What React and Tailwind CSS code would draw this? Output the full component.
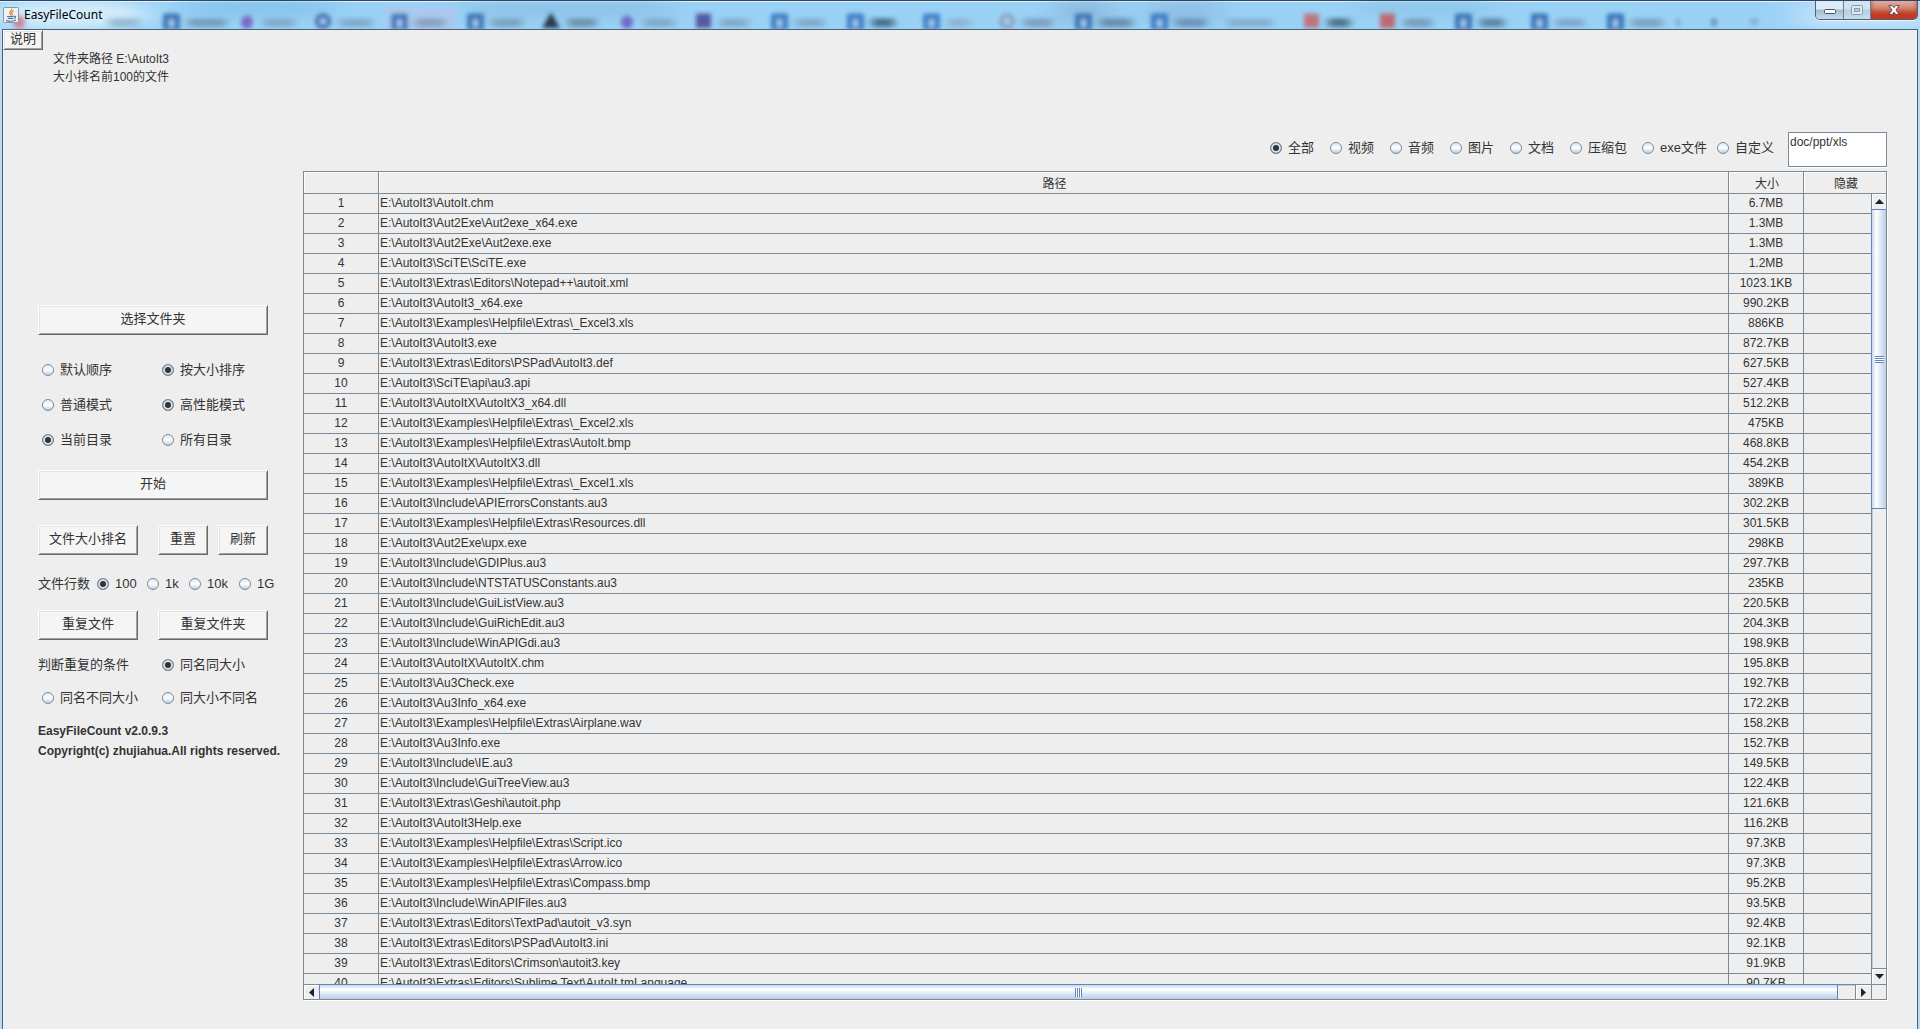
import { useState } from 'react'
import clsx from 'clsx'

const files = [
  ['AutoIt.chm', '6.7MB'],
  ['Aut2Exe\\Aut2exe_x64.exe', '1.3MB'],
  ['Aut2Exe\\Aut2exe.exe', '1.3MB'],
  ['SciTE\\SciTE.exe', '1.2MB'],
  ['Extras\\Editors\\Notepad++\\autoit.xml', '1023.1KB'],
  ['AutoIt3_x64.exe', '990.2KB'],
  ['Examples\\Helpfile\\Extras\\_Excel3.xls', '886KB'],
  ['AutoIt3.exe', '872.7KB'],
  ['Extras\\Editors\\PSPad\\AutoIt3.def', '627.5KB'],
  ['SciTE\\api\\au3.api', '527.4KB'],
  ['AutoItX\\AutoItX3_x64.dll', '512.2KB'],
  ['Examples\\Helpfile\\Extras\\_Excel2.xls', '475KB'],
  ['Examples\\Helpfile\\Extras\\AutoIt.bmp', '468.8KB'],
  ['AutoItX\\AutoItX3.dll', '454.2KB'],
  ['Examples\\Helpfile\\Extras\\_Excel1.xls', '389KB'],
  ['Include\\APIErrorsConstants.au3', '302.2KB'],
  ['Examples\\Helpfile\\Extras\\Resources.dll', '301.5KB'],
  ['Aut2Exe\\upx.exe', '298KB'],
  ['Include\\GDIPlus.au3', '297.7KB'],
  ['Include\\NTSTATUSConstants.au3', '235KB'],
  ['Include\\GuiListView.au3', '220.5KB'],
  ['Include\\GuiRichEdit.au3', '204.3KB'],
  ['Include\\WinAPIGdi.au3', '198.9KB'],
  ['AutoItX\\AutoItX.chm', '195.8KB'],
  ['Au3Check.exe', '192.7KB'],
  ['Au3Info_x64.exe', '172.2KB'],
  ['Examples\\Helpfile\\Extras\\Airplane.wav', '158.2KB'],
  ['Au3Info.exe', '152.7KB'],
  ['Include\\IE.au3', '149.5KB'],
  ['Include\\GuiTreeView.au3', '122.4KB'],
  ['Extras\\Geshi\\autoit.php', '121.6KB'],
  ['AutoIt3Help.exe', '116.2KB'],
  ['Examples\\Helpfile\\Extras\\Script.ico', '97.3KB'],
  ['Examples\\Helpfile\\Extras\\Arrow.ico', '97.3KB'],
  ['Examples\\Helpfile\\Extras\\Compass.bmp', '95.2KB'],
  ['Include\\WinAPIFiles.au3', '93.5KB'],
  ['Extras\\Editors\\TextPad\\autoit_v3.syn', '92.4KB'],
  ['Extras\\Editors\\PSPad\\AutoIt3.ini', '92.1KB'],
  ['Extras\\Editors\\Crimson\\autoit3.key', '91.9KB'],
  ['Extras\\Editors\\Sublime Text\\AutoIt.tmLanguage', '90.7KB'],
]

// browser tabs showing through the glass title bar: [x, shape, icon colour, label width, label colour]
const tabs = [
  [12, 'dot', '#c98a9c', 0, '#7a94ab'],
  [85, 'none', '', 30, '#8fb2cc'],
  [164, 'page', '#3c76b8', 38, '#6b93b4'],
  [240, 'dot', '#7a6cc4', 30, '#7ba3c2'],
  [316, 'ring', '#4c62a6', 32, '#7ba3c2'],
  [392, 'page', '#3c76b8', 28, '#8297ba'],
  [468, 'page', '#3c76b8', 30, '#7398b5'],
  [544, 'peak', '#26384a', 28, '#66869f'],
  [620, 'dot', '#6f6cc8', 30, '#7ba3c2'],
  [696, 'box', '#5458a0', 28, '#7ba3c2'],
  [772, 'page', '#3c7fc4', 28, '#7ba3c2'],
  [848, 'page', '#3c7fc4', 22, '#36566f'],
  [924, 'page', '#4080c6', 22, '#8aaccc'],
  [1000, 'ring', '#8d9cb8', 28, '#7795b5'],
  [1076, 'page', '#3a75b4', 32, '#5c80a0'],
  [1152, 'page', '#3c7cc4', 30, '#6389ac'],
  [1204, 'none', '', 44, '#7fa7c8'],
  [1304, 'box', '#bd7680', 22, '#3f5a72'],
  [1380, 'box', '#bd6a72', 28, '#6f92b0'],
  [1456, 'page', '#3874b8', 24, '#4f7392'],
  [1532, 'page', '#3874b8', 28, '#78a0c2'],
  [1608, 'page', '#3874b8', 30, '#7398b8'],
]

const TabIcon = ({ x, shape, color }) => {
  if (shape === 'dot') return <ellipse cx={x + 7} cy="22" rx="6" ry="7" fill={color} />
  if (shape === 'ring') return <circle cx={x + 7} cy="21" r="6" fill="none" stroke={color} strokeWidth="4" />
  if (shape === 'peak') return <path d={`M${x + 7} 12L${x + 16} 28H${x - 2}z`} fill={color} />
  if (shape === 'box') return <rect x={x} y="13" width="15" height="15" fill={color} />
  if (shape === 'none') return null
  return (
    <>
      <rect x={x - 1} y="13" width="17" height="17" rx="2" fill={color} />
      <rect x={x + 5} y="19" width="5" height="8" fill="#a9cdf2" />
    </>
  )
}

const TabGlow = () => (
  <svg className="absolute inset-0 w-full h-full" viewBox="0 0 1920 29" preserveAspectRatio="none" aria-hidden="true">
    <defs>
      <filter id="soft" x="-20%" y="-50%" width="140%" height="200%">
        <feGaussianBlur stdDeviation="2" />
      </filter>
      <filter id="softer" x="-20%" y="-50%" width="140%" height="200%">
        <feGaussianBlur stdDeviation="4 2" />
      </filter>
      <filter id="wide" x="-50%" y="-100%" width="200%" height="300%">
        <feGaussianBlur stdDeviation="18 6" />
      </filter>
    </defs>
    <g filter="url(#wide)">
      <ellipse cx="70" cy="14" rx="80" ry="16" fill="#d3ecfb" />
      <rect x="190" y="0" width="140" height="16" fill="#86c3ec" />
      <rect x="470" y="0" width="200" height="18" fill="#8dc4e8" />
      <rect x="1060" y="0" width="50" height="24" fill="#8ab9dc" />
      <rect x="1150" y="0" width="70" height="24" fill="#8ebfe4" />
      <rect x="1360" y="0" width="130" height="14" fill="#8ec6e8" />
      <rect x="1800" y="0" width="130" height="29" fill="#c4e2fa" />
    </g>
    <g filter="url(#soft)">
      <rect x="386" y="5" width="70" height="26" fill="#a9c9ee" />
      {tabs.map(([x, shape, color]) => (
        <TabIcon key={x} x={x} shape={shape} color={color} />
      ))}
      <rect x="1676" y="18" width="4" height="8" fill="#7aa6cc" />
      <rect x="1711" y="18" width="6" height="8" fill="#6b96bd" />
      <path d="M1748 19h12l-6 7z" fill="#7fa9cf" />
    </g>
    <g filter="url(#softer)">
      {tabs.map(([x, , , width, label]) => (
        <rect key={x} x={x + 24} y="18" width={width} height="9" fill={label} opacity="0.8" />
      ))}
    </g>
  </svg>
)

const JavaIcon = () => (
  <svg className="w-4 h-4" viewBox="0 0 16 16">
    <rect x="0.5" y="0.5" width="15" height="15" rx="1" fill="#eef2f5" stroke="#8399ab" />
    <path d="M8.6 1.6c1.6 1.8-3 3-1.8 4.8.4.8 1.2 1 .9 2M10.6 4c-2 .8-2.4 1.8-1.6 2.8.5.7.2 1.2-.3 1.7" fill="none" stroke="#e8731a" strokeWidth="1.2" />
    <path d="M4 9.5h6.5M4.8 11.4h5.4M3 13.4c3 1 7.5.8 10-.3M10.8 9.3c2.4-.6 2.4 1.6.2 2.2" fill="none" stroke="#4c7396" strokeWidth="1.1" />
  </svg>
)

const TitleBar = () => (
  <header className="relative flex h-[29px] shrink-0 justify-between overflow-hidden border-t border-[#2c4766] bg-[#9ad2f6] shadow-[inset_0_1px_0_#e4f4fd]">
    <TabGlow />
    <div className="relative flex items-center gap-[5px] self-start pl-[3px] pt-[5px]">
      <JavaIcon />
      <h1 className="text-[12px] leading-[18px] font-['Noto_Sans','Open_Sans',sans-serif] text-black">EasyFileCount</h1>
    </div>
    <div className="relative mr-[2px] flex h-[19px] overflow-hidden rounded-b-[5px] border border-t-0 border-[#4d6074] shadow-[0_1px_0_#e4f4fd]">
      <button aria-label="Minimize" className="flex w-7 items-center justify-center border-r border-[#6d8194] bg-linear-to-b from-[#dcebf7] from-45% via-[#a3bbd1] via-50% to-[#c6ddf0] pt-1">
        <svg className="w-3 h-[6px]" viewBox="0 0 12 6"><rect x="0.5" y="0.5" width="11" height="4" rx="1" fill="#fff" stroke="#4a5468" /></svg>
      </button>
      <button aria-label="Maximize" disabled className="flex w-[27px] items-center justify-center border-r border-[#6d8194] bg-linear-to-b from-[#cfe3f3] from-45% via-[#b3cde2] via-50% to-[#c6def0]">
        <svg className="w-3 h-[10px]" viewBox="0 0 12 10"><rect x="0.5" y="0.5" width="11" height="9" rx="1" fill="#dde8f1" stroke="#8c9cae" /><rect x="3.500" y="3.500" width="5" height="3" fill="#b9cbdb" stroke="#8c9cae" /></svg>
      </button>
      <button aria-label="Close" className="flex w-[46px] items-center justify-center bg-linear-to-b from-[#e0a79c] from-5% via-[#cf8474] via-45% to-[#d9745a] shadow-[inset_0_-8px_4px_#c03a22]">
        <svg className="w-3 h-[10px]" viewBox="0 0 12 10"><path d="M.8.600h3.400L6 2.700 7.800.600h3.400L7.900 5l3.300 4.400H7.800L6 7.200 4.200 9.400H.800L4.100 5z" fill="#fff" stroke="#5b3a44" strokeWidth="0.900" /></svg>
      </button>
    </div>
  </header>
)

const Radio = ({ name, label, checked, onChange, className }) => (
  <label className={clsx('flex shrink-0 items-center gap-[6px] whitespace-nowrap', className)}>
    <input
      type="radio"
      name={name}
      checked={checked}
      onChange={onChange}
      className={clsx(
        'size-3 shrink-0 appearance-none rounded-full border border-[#7a8a99] bg-linear-to-b from-[#dde8f3] via-white to-[#b8cfe5]',
        'checked:bg-none checked:bg-[#333] checked:shadow-[inset_0_0_0_2px_#d5e3f0]',
      )}
    />
    <span>{label}</span>
  </label>
)

const Button = ({ children, className }) => (
  <button className={clsx('h-[30px] border border-t-white border-l-white border-r-[#696969] border-b-[#696969] bg-[#f5f5f5] pb-[2px] text-center shadow-[inset_1px_1px_0_#e3e3e3,inset_-1px_-1px_0_#a0a0a0]', className)}>
    {children}
  </button>
)

const Sidebar = () => {
  const [order, setOrder] = useState('按大小排序')
  const [mode, setMode] = useState('高性能模式')
  const [scope, setScope] = useState('当前目录')
  const [limit, setLimit] = useState('100')
  const [rule, setRule] = useState('同名同大小')

  const groups = [
    ['order', ['默认顺序', '按大小排序'], order, setOrder],
    ['mode', ['普通模式', '高性能模式'], mode, setMode],
    ['scope', ['当前目录', '所有目录'], scope, setScope],
  ]
  const limits = [['100', 'w-[50px]'], ['1k', 'w-[42px]'], ['10k', 'w-[50px]'], ['1G', '']]
  const radio = (value) => ({ name: 'rule', label: value, checked: rule === value, onChange: () => setRule(value) })

  return (
    <aside className="w-[265px] shrink-0 pl-[35px] pt-[134px] text-[13px] leading-5">
      <Button className="w-[230px]">选择文件夹</Button>
      <div className="mt-[25px] flex flex-col gap-[15px]">
        {groups.map(([name, options, value, setValue]) => (
          <div key={name} className="flex pl-1">
            {options.map((option) => (
              <Radio key={option} name={name} label={option} checked={value === option} onChange={() => setValue(option)} className="w-[120px]" />
            ))}
          </div>
        ))}
      </div>
      <Button className="mt-5 w-[230px]">开始</Button>
      <div className="mt-[25px] flex w-[230px]">
        <Button className="w-[100px]">文件大小排名</Button>
        <Button className="ml-5 w-[50px]">重置</Button>
        <Button className="ml-[10px] w-[50px]">刷新</Button>
      </div>
      <div className="mt-[19px] mb-4 flex">
        <span className="w-[59px] shrink-0">文件行数</span>
        {limits.map(([value, width]) => (
          <Radio key={value} name="limit" label={value} checked={limit === value} onChange={() => setLimit(value)} className={width} />
        ))}
      </div>
      <div className="flex w-[230px] gap-5">
        <Button className="w-[100px]">重复文件</Button>
        <Button className="w-[110px]">重复文件夹</Button>
      </div>
      <div className="mt-[15px] flex">
        <span className="w-[124px] shrink-0">判断重复的条件</span>
        <Radio {...radio('同名同大小')} />
      </div>
      <div className="mt-[13px] flex pl-1">
        <Radio {...radio('同名不同大小')} className="w-[120px]" />
        <Radio {...radio('同大小不同名')} />
      </div>
      <div className="mt-[13px] whitespace-nowrap text-[12px] font-bold leading-5">
        <p>EasyFileCount v2.0.9.3</p>
        <p>Copyright(c) zhujiahua.All rights reserved.</p>
      </div>
    </aside>
  )
}

const filters = [
  ['全部', 'w-[60px]'],
  ['视频', 'w-[60px]'],
  ['音频', 'w-[60px]'],
  ['图片', 'w-[60px]'],
  ['文档', 'w-[60px]'],
  ['压缩包', 'w-[72px]'],
  ['exe文件', 'w-[75px]'],
  ['自定义', 'w-[71px]'],
]

const FilterBar = () => {
  const [filter, setFilter] = useState('全部')
  return (
    <div className="flex items-start justify-end text-[13px] leading-5">
      <div className="flex pt-[6px]">
        {filters.map(([name, width]) => (
          <Radio key={name} name="filter" label={name} checked={filter === name} onChange={() => setFilter(name)} className={width} />
        ))}
      </div>
      <textarea
        aria-label="自定义"
        defaultValue="doc/ppt/xls"
        className="block h-[35px] w-[99px] resize-none overflow-hidden border border-[#7a8a99] bg-white py-px pl-px text-[12px] leading-4 shadow-[0_1px_0_#fff] outline-none"
      />
    </div>
  )
}

const Arrow = ({ d, label, className }) => (
  <button aria-label={label} className={clsx('flex shrink-0 items-center justify-center border-[#7a8a99] bg-[#eee] shadow-[inset_1px_1px_0_#fff]', className)}>
    <svg className="size-[9px]" viewBox="0 0 9 9"><path d={d} fill="#222" /></svg>
  </button>
)

const VerticalBar = () => (
  <div className="z-10 col-start-2 row-start-2 flex min-h-0 flex-col border-l border-[#7a8a99] bg-[#eee] shadow-[inset_1px_0_0_#b8cfe5]">
    <Arrow d="M4.5 2L9 7H0z" label="Up" className="h-[15px]" />
    <div className="flex h-[300px] shrink-0 items-center justify-center border-y border-[#6382bf] bg-linear-to-r from-[#c5d8ea] via-white via-30% to-[#b8cfe5] shadow-[-1px_0_0_#6382bf]">
      <div className="h-[7px] w-[9px] bg-[repeating-linear-gradient(to_bottom,#6382bf_0_1px,#fff_1px_2px)]" />
    </div>
    <div className="flex-1" />
    <Arrow d="M0 2h9L4.5 7z" label="Down" className="h-4 border-t" />
  </div>
)

const HorizontalBar = () => (
  <div className="z-10 col-start-1 row-start-3 flex border-t border-[#7a8a99] bg-[#eee] shadow-[inset_0_1px_0_#b8cfe5]">
    <Arrow d="M2 4.5L7 0v9z" label="Left" className="w-[15px]" />
    <div className="-mt-px flex h-[15px] flex-1 items-center justify-center border-x border-t border-[#6382bf] bg-linear-to-b from-[#c5d8ea] via-white via-30% to-[#b8cfe5]">
      <div className="h-[9px] w-[7px] bg-[repeating-linear-gradient(to_right,#6382bf_0_1px,#fff_1px_2px)]" />
    </div>
    <div className="w-[17px]" />
    <Arrow d="M2 0l5 4.5L2 9z" label="Right" className="w-4 border-l" />
  </div>
)

const FileTable = () => (
  <div className="mt-1 grid min-h-0 flex-1 grid-cols-[1fr_15px] grid-rows-[22px_1fr_15px] overflow-hidden border border-[#7a8a99] shadow-[1px_1px_0_#fff]">
    <div className="col-span-2 col-start-1 row-span-2 row-start-1 min-h-0 overflow-hidden">
      <table className="w-full table-fixed border-separate border-spacing-0 text-[12px] leading-[18px]">
        <colgroup>
          <col className="w-[75px]" />
          <col />
          <col className="w-[75px]" />
          <col className="w-[82px]" />
        </colgroup>
        <thead>
          <tr>
            {['', '路径', '大小', '隐藏'].map((title, i) => (
              <th key={i} className="h-[22px] border-r border-b border-[#7a8a99] p-0 pt-[2px] pl-[2px] font-normal shadow-[inset_1px_1px_0_#fff] last:border-r-0">{title}</th>
            ))}
          </tr>
        </thead>
        <tbody>
          {files.map(([path, size], i) => (
            <tr key={path}>
              <td className="h-5 border-r border-b border-[#7a8a99] p-0 pb-px text-center">{i + 1}</td>
              <td className="h-5 border-r border-b border-[#7a8a99] p-0 pb-px pl-px whitespace-nowrap">{'E:\\AutoIt3\\' + path}</td>
              <td className="h-5 border-r border-b border-[#7a8a99] p-0 pb-px text-center">{size}</td>
              <td className="h-5 border-b border-[#7a8a99] p-0"></td>
            </tr>
          ))}
        </tbody>
      </table>
    </div>
    <VerticalBar />
    <HorizontalBar />
    <div className="z-10 col-start-2 row-start-3 border-t border-l border-[#7a8a99] bg-[#eee]" />
  </div>
)

const App = () => {
  return (
    <div className="flex h-screen flex-col overflow-hidden bg-[#b9d9f5] font-['Liberation_Sans','Noto_Sans_CJK_SC',sans-serif] text-[#333]">
      <TitleBar />
      <main className="mx-[2px] flex min-h-0 flex-1 flex-col border-x border-t border-[#4f6273] bg-[#eee]">
        <nav className="flex">
          <button className="h-5 w-10 border border-t-white border-l-white border-r-[#696969] border-b-[#696969] bg-[#f5f5f5] pb-[2px] text-[13px] leading-4 shadow-[inset_1px_1px_0_#e3e3e3,inset_-1px_-1px_0_#a0a0a0]">说明</button>
        </nav>
        <div className="pl-[50px] text-[12px] leading-[18px]">
          <p>文件夹路径 E:\AutoIt3</p>
          <p>大小排名前100的文件</p>
        </div>
        <div className="flex min-h-0 flex-1 pt-[46px]">
          <div className="pt-[39px]">
            <Sidebar />
          </div>
          <div className="ml-[35px] mr-[30px] mb-[29px] flex min-w-0 flex-1 flex-col">
            <FilterBar />
            <FileTable />
          </div>
        </div>
      </main>
    </div>
  )
}

export default App
